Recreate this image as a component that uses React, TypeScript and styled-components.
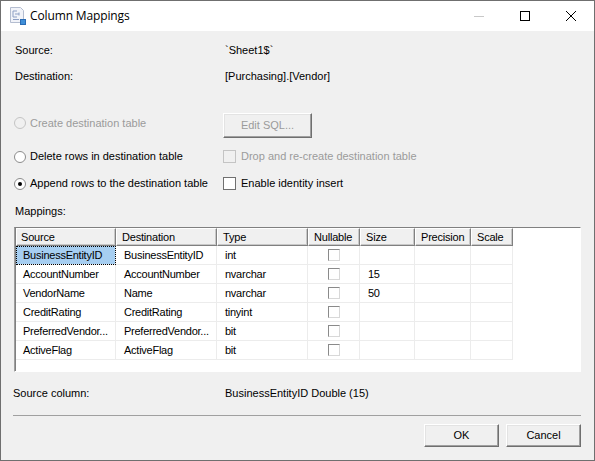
import React from 'react';
import styled, { createGlobalStyle } from 'styled-components';

const Global = createGlobalStyle`
  html, body { margin: 0; padding: 0; background: #efefef; }
  * { box-sizing: border-box; }
`;

const Window = styled.div`
  width: 595px;
  height: 461px;
  display: flex;
  flex-direction: column;
  border: 1px solid #6f6f6f;
  background: #f0f0f0;
  color: #000;
  font: 11px/13px "Liberation Sans", Arial, sans-serif;
  overflow: hidden;
`;

const TitleBar = styled.div`
  height: 30px;
  flex: none;
  display: flex;
  align-items: center;
  background: #fff;
  padding-left: 9px;
`;

const TitleText = styled.div`
  flex: 1;
  margin-left: 4px;
  font: 12px/16px "Open Sans", "Noto Sans", sans-serif;
  letter-spacing: -0.13px;
`;

const WinButton = styled.div`
  width: 46px;
  height: 30px;
  flex: none;
  display: flex;
  align-items: center;
  justify-content: center;
`;

const Body = styled.div`
  flex: 1;
  display: flex;
  flex-direction: column;
  padding: 12px 13px 12px 13px;
`;

const InfoRow = styled.div<{ $h: number }>`
  height: ${p => p.$h}px;
  display: flex;
  padding-left: 1px;
  align-items: center;
`;

const InfoLabel = styled.div<{ $w?: number }>`
  width: ${p => p.$w ?? 210}px;
  flex: none;
`;

const OptionsGrid = styled.div`
  margin-top: 15px;
  display: grid;
  grid-template-columns: 209px 1fr;
  grid-template-rows: 33px 27px 27px;
`;

const Option = styled.label<{ $disabled?: boolean; $first?: boolean }>`
  display: flex;
  align-items: center;
  height: ${p => (p.$first ? '26px' : 'auto')};
  gap: 4px;
  color: ${p => (p.$disabled ? '#9b9b9b' : '#000')};
`;

const CheckOption = styled(Option)`
  gap: 5px;
`;

const Radio = styled.span<{ $checked?: boolean; $disabled?: boolean }>`
  width: 12px;
  height: 12px;
  border-radius: 50%;
  flex: none;
  display: flex;
  align-items: center;
  justify-content: center;
  background: ${p => (p.$disabled ? '#f0f0f0' : '#fff')};
  border: 1px solid ${p => (p.$disabled ? '#c4c4c4' : '#8c8c8c')};
  &::after {
    content: '';
    width: 4px;
    height: 4px;
    border-radius: 50%;
    background: ${p => (p.$checked ? '#000' : 'transparent')};
  }
`;

const Check = styled.span<{ $disabled?: boolean }>`
  width: 13px;
  height: 13px;
  flex: none;
  display: block;
  background: ${p => (p.$disabled ? '#f0f0f0' : '#fff')};
  border: 1px solid ${p => (p.$disabled ? '#c4c4c4' : '#707070')};
`;

const Button = styled.div<{ $w: number; $h: number; $disabled?: boolean }>`
  width: ${p => p.$w}px;
  height: ${p => p.$h}px;
  display: flex;
  align-items: center;
  justify-content: center;
  background: #f0f0f0;
  color: ${p => (p.$disabled ? '#9b9b9b' : '#000')};
  border: 1px solid;
  border-color: #fff #6f6f6f #6f6f6f #fff;
  box-shadow: inset -1px -1px 0 #a0a0a0, inset 1px 1px 0 #e3e3e3;
`;

const EditButton = styled(Button)`
  margin-top: 3px;
`;

const MappingsLabel = styled.div`
  margin-top: 8px;
  height: 22px;
  padding-left: 1px;
`;

const GridBox = styled.div`
  height: 145px;
  background: #fff;
  border: 1px solid;
  border-color: #808080 #fff #fff #9f9f9f;
  box-shadow: inset 1px 0 0 #808080;
  padding-left: 1px;
`;

const columns = '100px 101px 91px 52px 55px 56px 42px';

const HeaderRow = styled.div`
  display: grid;
  grid-template-columns: ${columns};
  width: 497px;
  height: 18px;
`;

const HeaderCell = styled.div`
  padding: 2px 0 0 5px;
  background: #f0f0f0;
  border: 1px solid;
  border-color: #fff #808080 #808080 #fff;
  box-shadow: inset -1px -1px 0 #c8c8c8;
  letter-spacing: -0.2px;
  white-space: nowrap;
  &:first-child { padding-left: 4px; }
`;

const DataRow = styled.div`
  display: grid;
  grid-template-columns: ${columns};
  width: 497px;
  height: 19px;
`;

const DataCell = styled.div<{ $selected?: boolean; $center?: boolean }>`
  display: flex;
  align-items: center;
  justify-content: ${p => (p.$center ? 'center' : 'flex-start')};
  padding: ${p => (p.$center ? '0' : '1px 0 0 8px')};
  border-right: 1px solid #ececec;
  border-bottom: 1px solid #ececec;
  letter-spacing: -0.25px;
  white-space: nowrap;
  background: ${p => (p.$selected ? '#a6cef1' : '#fff')};
  outline: ${p => (p.$selected ? '1px dotted #000' : 'none')};
  outline-offset: -1px;
  &:first-child { padding-left: 7px; }
`;

const CellCheck = styled.span`
  width: 12px;
  height: 12px;
  display: block;
  background: #fff;
  border: 1px solid;
  border-color: #8a8a8a #d8d8d8 #d8d8d8 #8a8a8a;
`;

const SourceColumnRow = styled.div`
  margin: 14px 0 0 -1px;
  height: 14px;
  display: flex;
  align-items: center;
`;

const Divider = styled.div`
  margin: 15px 0 0 -1px;
  height: 1px;
  background: #a0a0a0;
`;

const Footer = styled.div`
  margin-top: 8px;
  display: flex;
  justify-content: flex-end;
  gap: 7px;
`;

const rows = [
  ['BusinessEntityID', 'BusinessEntityID', 'int', ''],
  ['AccountNumber', 'AccountNumber', 'nvarchar', '15'],
  ['VendorName', 'Name', 'nvarchar', '50'],
  ['CreditRating', 'CreditRating', 'tinyint', ''],
  ['PreferredVendor...', 'PreferredVendor...', 'bit', ''],
  ['ActiveFlag', 'ActiveFlag', 'bit', ''],
];

const headers = ['Source', 'Destination', 'Type', 'Nullable', 'Size', 'Precision', 'Scale'];

const TitleIcon = () => (
  <svg width="16" height="18" viewBox="0 0 16 18">
    <path d="M.5.5h10l3 3v12H.5z" fill="#f1f3f9" stroke="#b4bdd0" />
    <path d="M3 4h4M3 4v6h4M5 7h4M9 5.5v3M3 12.5h6" fill="none" stroke="#8d9fc4" />
    <rect x="10.5" y="12.5" width="5" height="5" fill="#3f8fd8" stroke="#2a6cb5" />
  </svg>
);

const App: React.FC = () => (
  <>
    <Global />
    <Window>
      <TitleBar>
        <TitleIcon />
        <TitleText>Column Mappings</TitleText>
        <WinButton>
          <svg width="10" height="10" viewBox="0 0 10 10"><path d="M0 5.5h10" stroke="#c8c8c8" /></svg>
        </WinButton>
        <WinButton>
          <svg width="10" height="10" viewBox="0 0 10 10"><rect x=".5" y=".5" width="9" height="9" fill="none" stroke="#000" /></svg>
        </WinButton>
        <WinButton>
          <svg width="10" height="10" viewBox="0 0 10 10"><path d="M0 0l10 10M10 0L0 10" stroke="#000" strokeWidth="1" /></svg>
        </WinButton>
      </TitleBar>
      <Body>
        <InfoRow $h={14}><InfoLabel>Source:</InfoLabel><div>`Sheet1$`</div></InfoRow>
        <InfoRow $h={38}><InfoLabel>Destination:</InfoLabel><div>[Purchasing].[Vendor]</div></InfoRow>
        <OptionsGrid>
          <Option $disabled $first><Radio $disabled />Create destination table</Option>
          <div><EditButton $w={89} $h={25} $disabled>Edit SQL...</EditButton></div>
          <Option><Radio />Delete rows in destination table</Option>
          <CheckOption $disabled><Check $disabled />Drop and re-create destination table</CheckOption>
          <Option><Radio $checked />Append rows to the destination table</Option>
          <CheckOption><Check />Enable identity insert</CheckOption>
        </OptionsGrid>
        <MappingsLabel>Mappings:</MappingsLabel>
        <GridBox>
          <HeaderRow>
            {headers.map(h => <HeaderCell key={h}>{h}</HeaderCell>)}
          </HeaderRow>
          {rows.map((r, i) => (
            <DataRow key={i}>
              <DataCell $selected={i === 0}>{r[0]}</DataCell>
              <DataCell>{r[1]}</DataCell>
              <DataCell>{r[2]}</DataCell>
              <DataCell $center><CellCheck /></DataCell>
              <DataCell>{r[3]}</DataCell>
              <DataCell />
              <DataCell />
            </DataRow>
          ))}
        </GridBox>
        <SourceColumnRow>
          <InfoLabel $w={212}>Source column:</InfoLabel>
          <div>BusinessEntityID Double (15)</div>
        </SourceColumnRow>
        <Divider />
        <Footer>
          <Button $w={75} $h={23}>OK</Button>
          <Button $w={75} $h={23}>Cancel</Button>
        </Footer>
      </Body>
    </Window>
  </>
);

export default App;
